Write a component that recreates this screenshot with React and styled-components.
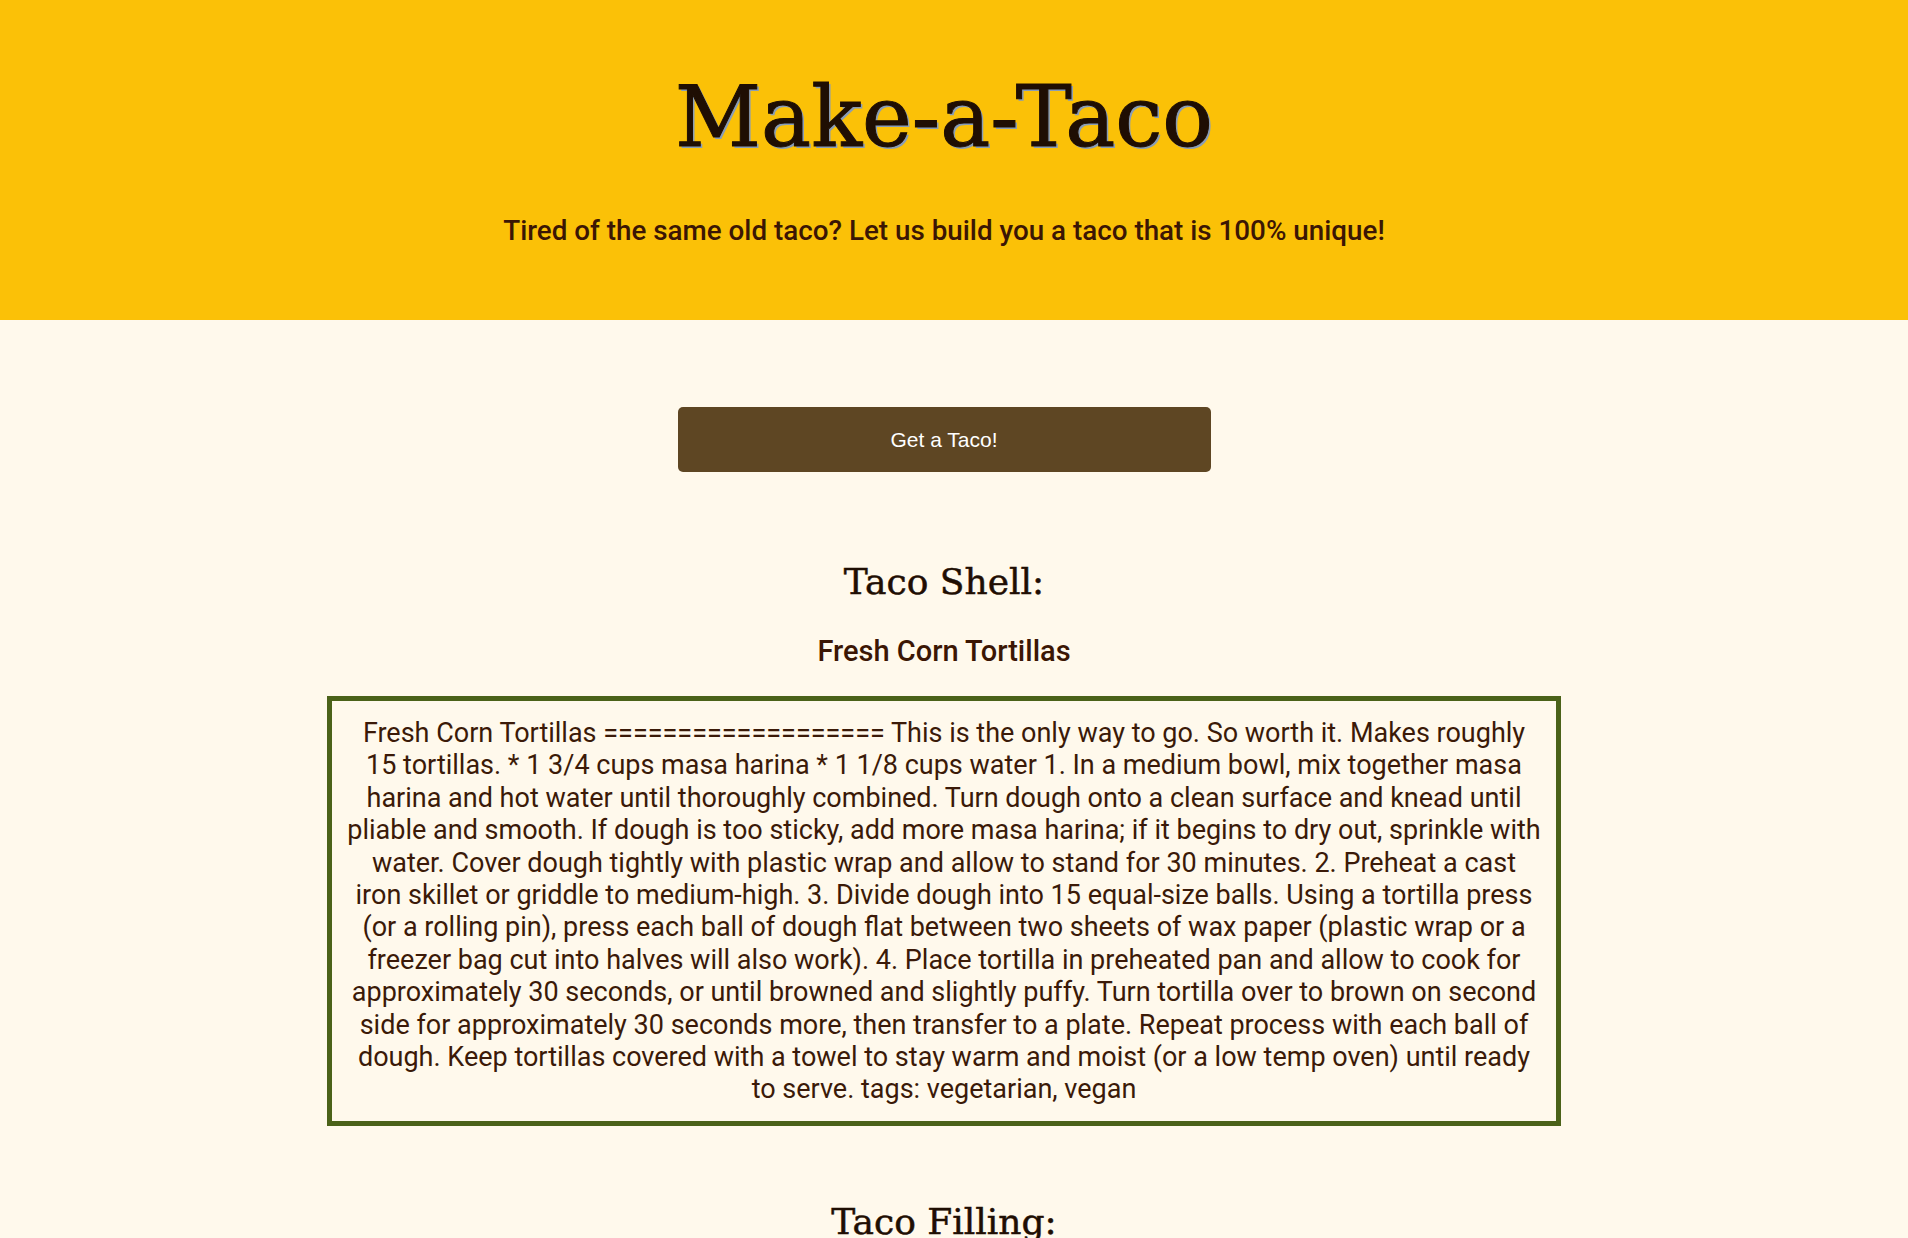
import React from "react";
import styled, { createGlobalStyle } from "styled-components";

const GlobalStyle = createGlobalStyle`
  html, body {
    margin: 0;
    padding: 0;
    background: #fff9ec;
  }
  body {
    font-family: Roboto, "Noto Sans", sans-serif;
    color: #3b1a08;
  }
  * { box-sizing: border-box; }
`;

const Header = styled.header`
  background: #fbc107;
  height: 320px;
  display: flex;
  flex-direction: column;
  align-items: center;
  padding: 75px 20px 0 0;
`;

const Title = styled.h1`
  margin: 0;
  font-family: "DejaVu Serif", "Liberation Serif", serif;
  font-weight: 400;
  font-size: 84px;
  line-height: 1;
  color: #1f0e03;
  -webkit-text-stroke: 1px #1f0e03;
  text-shadow: 2px 2px 0 #8a9db5;
`;

const Tagline = styled.p`
  margin: 55px 0 0;
  font-family: Roboto, sans-serif;
  font-weight: 500;
  font-size: 27.8px;
  line-height: 34px;
  color: #3b1604;
`;

const Main = styled.main`
  display: flex;
  flex-direction: column;
  align-items: center;
  padding: 87px 20px 0 0;
`;

const TacoButton = styled.button`
  width: 533px;
  height: 65px;
  border: none;
  border-radius: 5px;
  background: #5e4623;
  color: #ffffff;
  font-family: "Liberation Sans", Arial, sans-serif;
  font-size: 21px;
  cursor: pointer;
`;

const Section = styled.section`
  display: flex;
  flex-direction: column;
  align-items: center;
  width: 100%;
  margin-top: ${(p) => p.$top}px;
`;

const SectionTitle = styled.h2`
  margin: 0;
  font-family: "DejaVu Serif", "Liberation Serif", serif;
  font-weight: 400;
  font-size: 36px;
  line-height: 44px;
  color: #1f0e03;
  -webkit-text-stroke: 0.5px #1f0e03;
`;

const RecipeName = styled.h3`
  margin: 31px 0 0;
  font-family: Roboto, sans-serif;
  font-weight: 500;
  font-size: 29px;
  line-height: 33px;
  color: #3b1604;
`;

const RecipeBox = styled.div`
  margin-top: 28px;
  width: 1234px;
  border: 5px solid #4b6219;
  padding: 16px 14px 15px;
  text-align: center;
  font-family: Roboto, sans-serif;
  font-size: 27px;
  line-height: 32.4px;
  color: #3b1a08;
`;

const shellText =
  "Fresh Corn Tortillas =================== This is the only way to go. So worth it. Makes roughly 15 tortillas. * 1 3/4 cups masa harina * 1 1/8 cups water 1. In a medium bowl, mix together masa harina and hot water until thoroughly combined. Turn dough onto a clean surface and knead until pliable and smooth. If dough is too sticky, add more masa harina; if it begins to dry out, sprinkle with water. Cover dough tightly with plastic wrap and allow to stand for 30 minutes. 2. Preheat a cast iron skillet or griddle to medium-high. 3. Divide dough into 15 equal-size balls. Using a tortilla press (or a rolling pin), press each ball of dough flat between two sheets of wax paper (plastic wrap or a freezer bag cut into halves will also work). 4. Place tortilla in preheated pan and allow to cook for approximately 30 seconds, or until browned and slightly puffy. Turn tortilla over to brown on second side for approximately 30 seconds more, then transfer to a plate. Repeat process with each ball of dough. Keep tortillas covered with a towel to stay warm and moist (or a low temp oven) until ready to serve. tags: vegetarian, vegan";

export default function App() {
  return (
    <>
      <GlobalStyle />
      <Header>
        <Title>Make-a-Taco</Title>
        <Tagline>Tired of the same old taco? Let us build you a taco that is 100% unique!</Tagline>
      </Header>
      <Main>
        <TacoButton>Get a Taco!</TacoButton>
        <Section $top={88}>
          <SectionTitle>Taco Shell:</SectionTitle>
          <RecipeName>Fresh Corn Tortillas</RecipeName>
          <RecipeBox>{shellText}</RecipeBox>
        </Section>
        <Section $top={74}>
          <SectionTitle>Taco Filling:</SectionTitle>
          <RecipeName>Spicy Pork</RecipeName>
        </Section>
      </Main>
    </>
  );
}
